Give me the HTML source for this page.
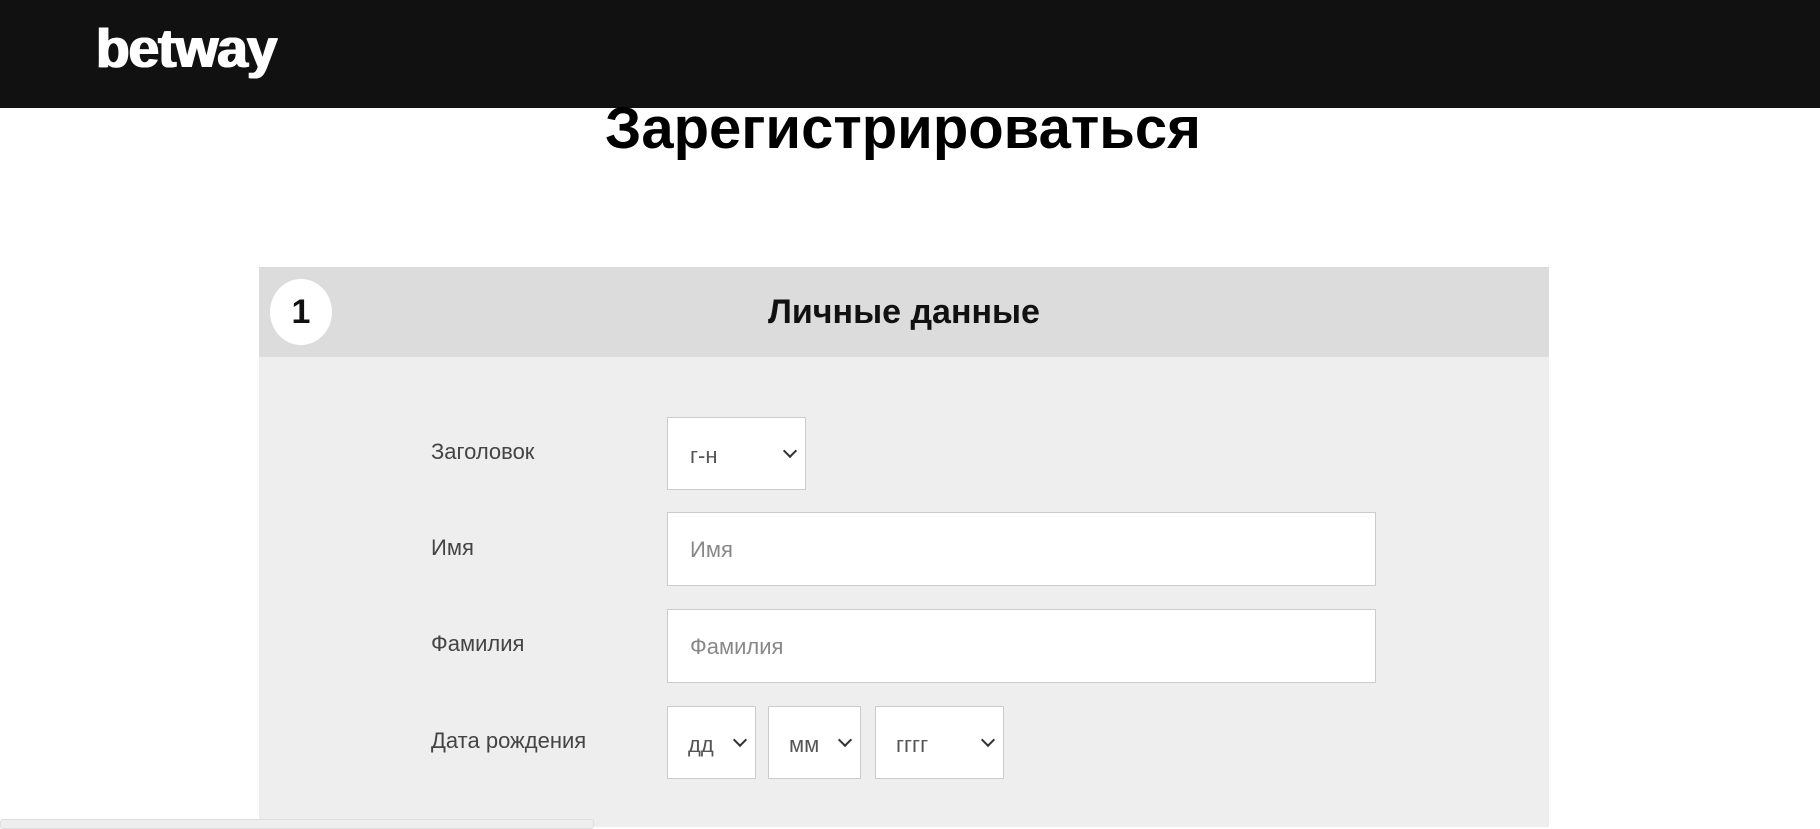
<!DOCTYPE html>
<html><head><meta charset="utf-8"><style>
*{margin:0;padding:0;box-sizing:border-box}
body{width:1820px;height:825px;overflow:hidden;background:#fff;font-family:"Liberation Sans",sans-serif;position:relative}
.hdr{position:absolute;left:0;top:0;width:1820px;height:108px;background:#111}
.logo{position:absolute;left:96px;top:16px;color:#fff;font-weight:bold;font-size:55px;letter-spacing:-1px;text-shadow:1px 0 #fff,-1px 0 #fff}
h1{position:absolute;left:0;width:1806px;text-align:center;top:95px;font-size:58px;font-weight:bold;color:#000;letter-spacing:0}
.panel{position:absolute;left:259px;top:267px;width:1290px;height:560px;background:#eee}
.ph{height:90px;background:#dcdcdc;position:relative}
.circ{position:absolute;left:11px;top:12px;width:62px;height:66px;border-radius:50%;background:#fff;font-weight:bold;font-size:34px;text-align:center;line-height:66px;color:#111}
.pt{position:absolute;left:0;width:1290px;text-align:center;top:26px;font-size:34px;font-weight:bold;color:#111}
.lbl{position:absolute;left:172px;font-family:"Liberation Sans Narrow","Liberation Sans",sans-serif;font-size:22px;color:#444;font-weight:300}
.box{position:absolute;background:#fff;border:1px solid #ccc;font-family:"Liberation Sans Narrow","Liberation Sans",sans-serif;font-size:22px;color:#555}
.box span{position:absolute;left:22px;top:24px}
.box i{position:absolute;right:10px;top:28px;width:10px;height:10px;border-right:2px solid #333;border-bottom:2px solid #333;transform:rotate(45deg)}
.ph2{color:#888}
.bar{position:absolute;left:0;top:819px;width:594px;height:10px;background:#eee;border:1px solid #ddd;border-radius:3px}
</style></head><body>
<div class="hdr"><div class="logo">betway</div></div>
<h1>Зарегистрироваться</h1>
<div class="panel">
<div class="ph"><div class="circ">1</div><div class="pt">Личные данные</div></div>
<div class="lbl" style="top:172px">Заголовок</div>
<div class="box" style="left:408px;top:150px;width:139px;height:73px"><span style="top:25px">г-н</span><i></i></div>
<div class="lbl" style="top:268px">Имя</div>
<div class="box" style="left:408px;top:245px;width:709px;height:74px"><span class="ph2">Имя</span></div>
<div class="lbl" style="top:364px">Фамилия</div>
<div class="box" style="left:408px;top:342px;width:709px;height:74px"><span class="ph2">Фамилия</span></div>
<div class="lbl" style="top:461px">Дата рождения</div>
<div class="box" style="left:408px;top:439px;width:89px;height:73px"><span style="left:20px;top:25px">дд</span><i></i></div>
<div class="box" style="left:509px;top:439px;width:93px;height:73px"><span style="left:20px;top:25px">мм</span><i></i></div>
<div class="box" style="left:616px;top:439px;width:129px;height:73px"><span style="left:20px;top:25px">гггг</span><i></i></div>
</div>
<div class="bar"></div>
</body></html>
